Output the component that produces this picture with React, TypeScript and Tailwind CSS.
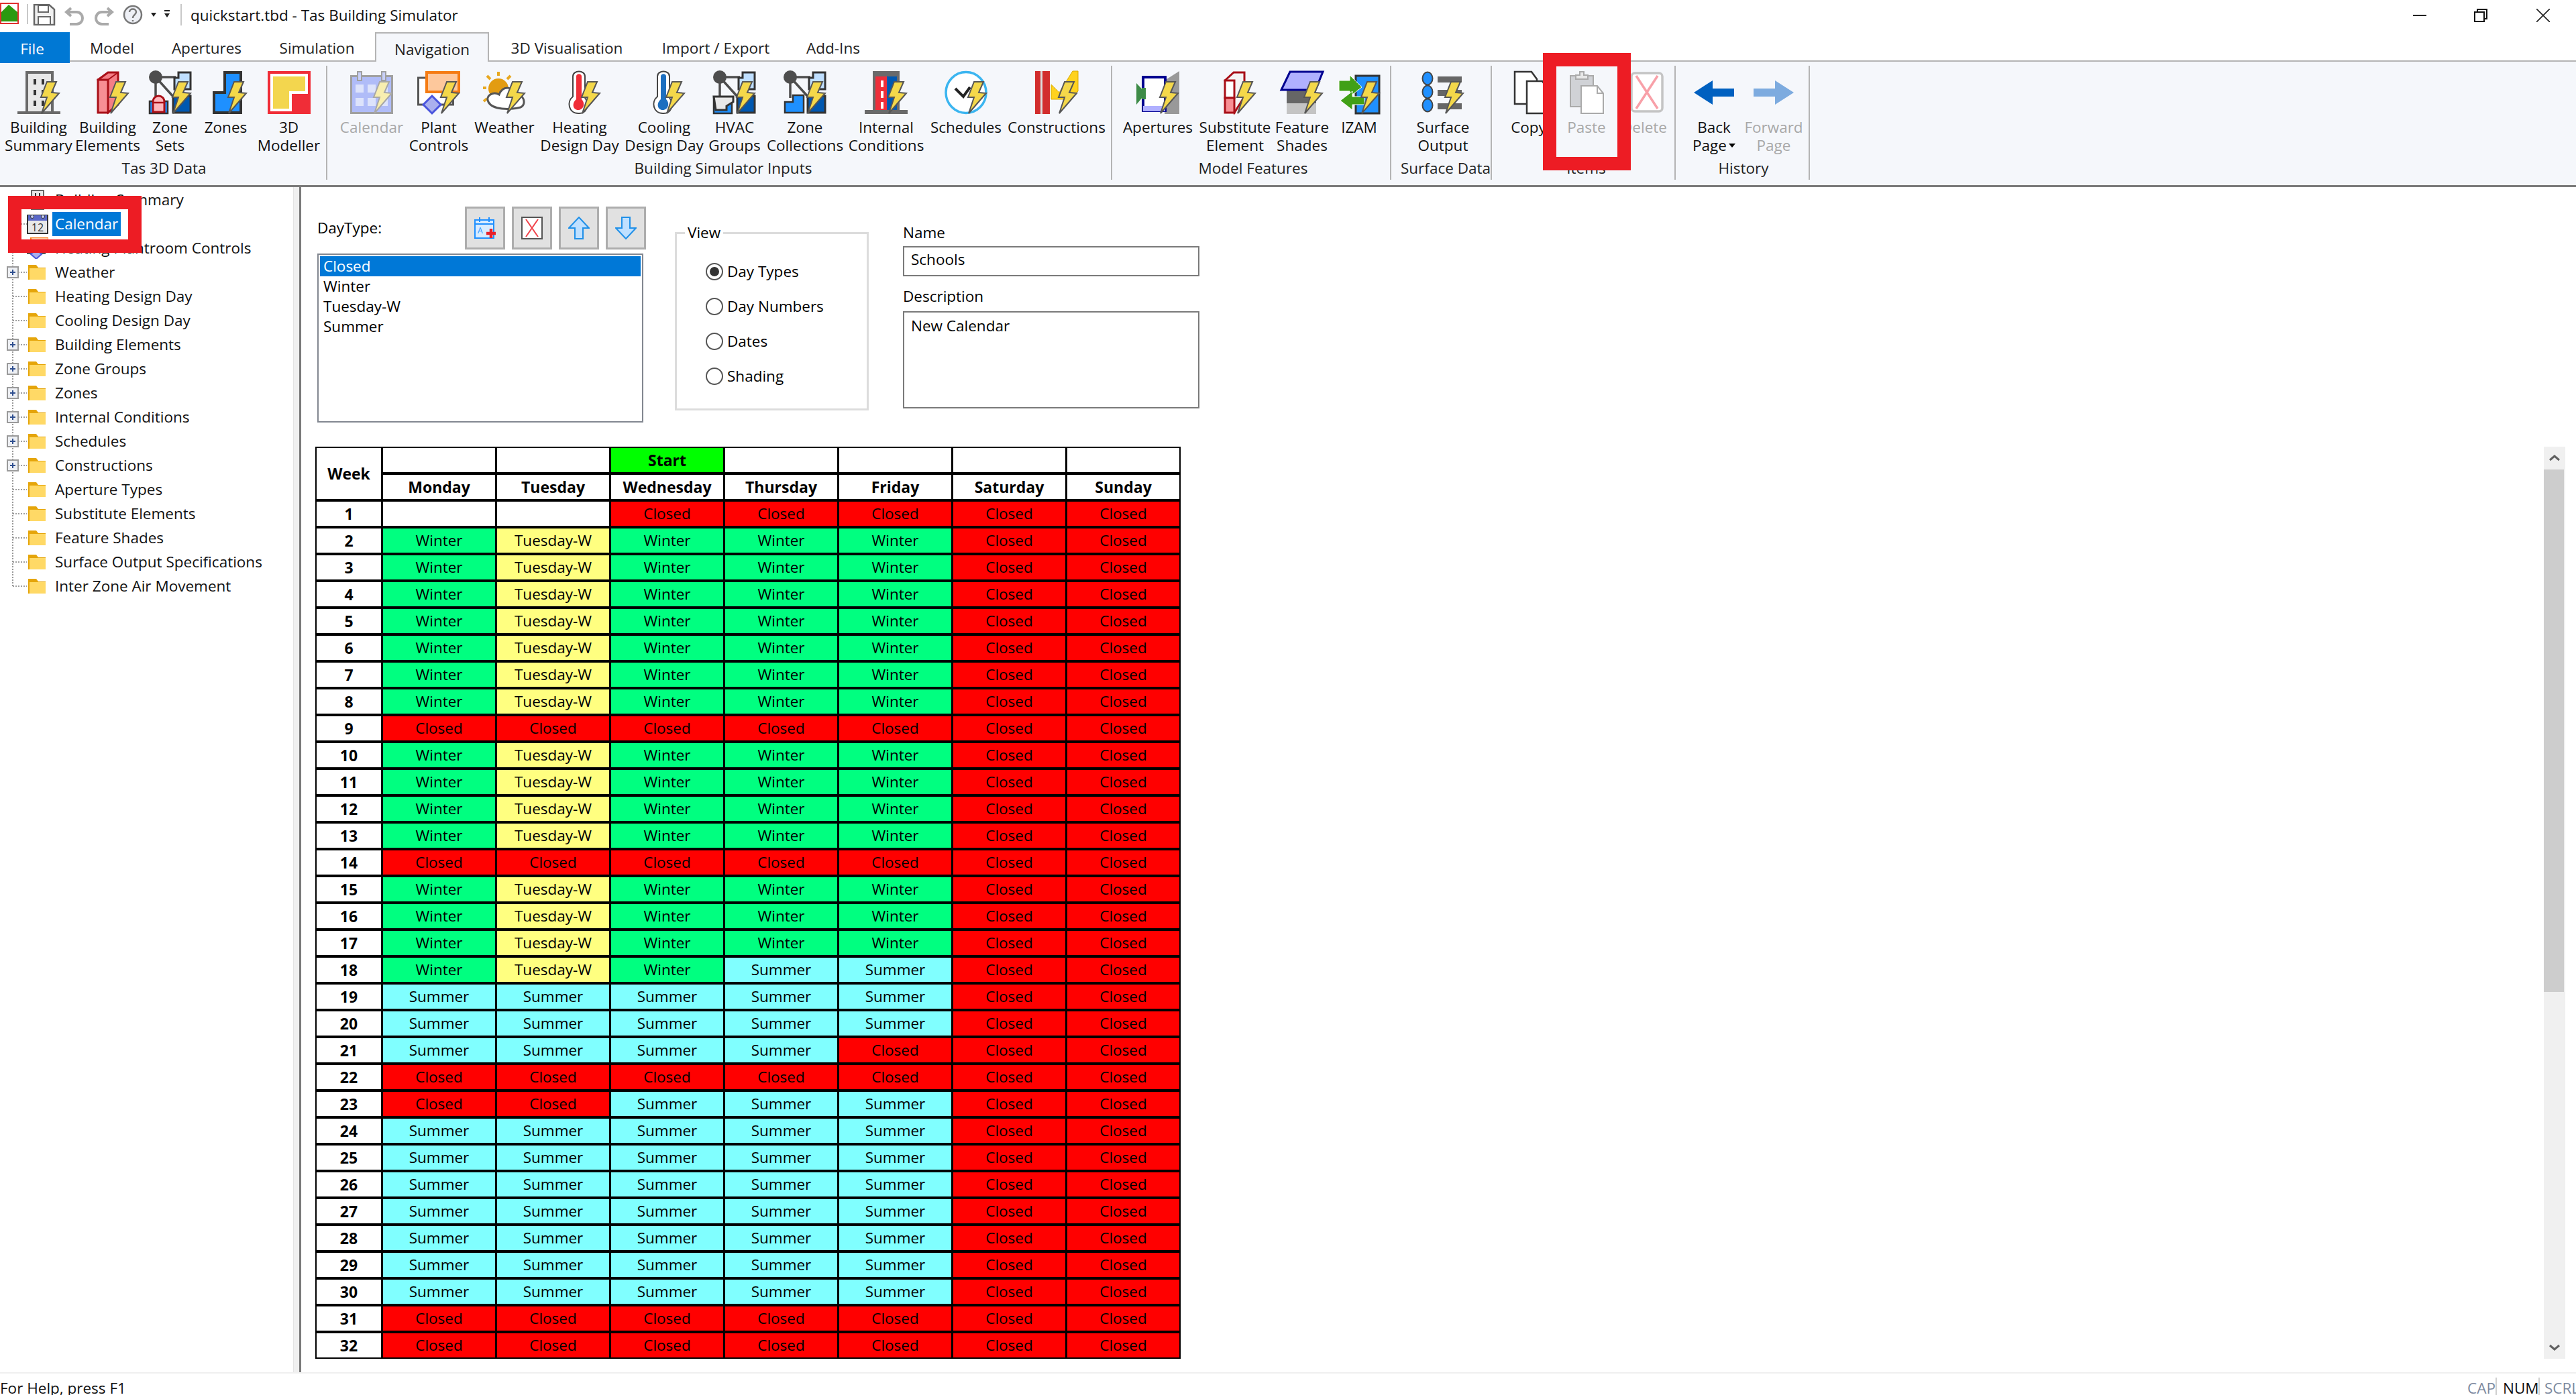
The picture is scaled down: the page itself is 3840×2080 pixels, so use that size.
import React from 'react';

const FONT = "font-['Open_Sans','Noto_Sans',sans-serif]";

// shared lightning bolt that sits on most of the ribbon icons
const Bolt: React.FC<{ faded?: boolean }> = ({ faded }) => (
  <polygon
    points="44,16 58,16 51,32 62,33 36,63 44,39 35,39"
    fill={faded ? '#f8eeb0' : '#f4d84a'}
    stroke={faded ? '#a8a8a8' : '#565656'}
    strokeWidth="2"
  />
);

const Svg: React.FC<{ children: React.ReactNode }> = ({ children }) => (
  <svg width="64" height="64" viewBox="0 0 64 64" className="overflow-visible">
    {children}
  </svg>
);

const Network: React.FC<{ children: React.ReactNode }> = ({ children }) => (
  <>
    <path d="M10 9H40M10 9V40M10 9L38 40" stroke="#4d4d4d" strokeWidth="3.5" fill="none" />
    <circle cx="10" cy="9" r="10" fill="#4d4d4d" />
    <path d="M44 2H62V27H38V10H44Z" fill="#bfdfff" stroke="#333" strokeWidth="3" />
    <path d="M36 62V37H62V62Z" fill="#0058b0" stroke="#333" strokeWidth="3" />
    {children}
    <Bolt />
  </>
);

const icons: Record<string, React.ReactNode> = {
  buildingSummary: (
    <Svg>
      <rect x="14" y="2" width="38" height="60" fill="#e8e8e8" stroke="#6a6a6a" strokeWidth="4" />
      <rect y="60" width="64" height="4" fill="#6a6a6a" />
      {[12, 28, 44].map((y) => (
        <React.Fragment key={y}>
          <rect x="24" y={y} width="4" height="8" fill="#333" />
          <rect x="36" y={y} width="4" height="8" fill="#333" />
        </React.Fragment>
      ))}
      <Bolt />
    </Svg>
  ),
  buildingElements: (
    <Svg>
      <path d="M17 13L32 2H47V50L32 62Z" fill="#f47f86" stroke="#a80f17" strokeWidth="3" />
      <rect x="17" y="13" width="15" height="49" fill="#f78f94" stroke="#a80f17" strokeWidth="3" />
      <path d="M32 13L47 2" stroke="#a80f17" strokeWidth="2" />
      <Bolt />
    </Svg>
  ),
  zoneSets: (
    <Svg>
      <Network>
        <rect x="1" y="45" width="27" height="18" fill="#1e90ff" stroke="#333" strokeWidth="2.5" />
        <path d="M6 61V46C6 34 23 34 23 46V61Z" fill="#ffb6bc" stroke="#a80f17" strokeWidth="3" />
        <path d="M6 47H23" stroke="#a80f17" strokeWidth="2.5" />
      </Network>
    </Svg>
  ),
  zones: (
    <Svg>
      <path d="M14 62V32H30V2H54V62Z" fill="#1e90ff" stroke="#333" strokeWidth="4" />
      <Bolt />
    </Svg>
  ),
  modeller: (
    <Svg>
      <rect width="64" height="64" fill="#f02d37" />
      <path d="M4 4H60V34H36V60H4Z" fill="#fff" />
      <path d="M8 8H56V30H32V56H8Z" fill="#f3d64e" />
    </Svg>
  ),
  calendar: (
    <Svg>
      <rect x="1.5" y="7.5" width="61" height="55" fill="#b0bcf8" stroke="#a0a0a0" strokeWidth="3" />
      <rect x="11" y="1" width="6" height="13" fill="#c8d0f8" stroke="#a0a0a0" strokeWidth="2" />
      <rect x="47" y="1" width="6" height="13" fill="#c8d0f8" stroke="#a0a0a0" strokeWidth="2" />
      {[20, 40].map((y) =>
        [8, 26, 44].map((x) => <rect key={`${x}-${y}`} x={x} y={y} width="12" height="12" fill="#dde3fb" />),
      )}
      <Bolt faded />
    </Svg>
  ),
  plantControls: (
    <Svg>
      <rect x="1.5" y="10" width="52" height="40" fill="#fff" stroke="#555" strokeWidth="3" />
      <rect x="14" y="2" width="48" height="29" fill="#fdc89c" stroke="#f57c13" strokeWidth="4" />
      <path d="M22 37L35 50L22 63L9 50Z" fill="#aab0ee" stroke="#4a55dd" strokeWidth="3" />
      <Bolt />
    </Svg>
  ),
  weather: (
    <Svg>
      <circle cx="23" cy="26" r="15" fill="#e39c12" />
      <path d="M23 1V7M6 7L11 12M41 7L36 12M0 25H5M1 45L6 41" stroke="#e8a820" strokeWidth="4" />
      <path d="M8 46C3 36 16 30 24 35C30 20 46 24 48 34C60 32 66 50 56 54C40 58 14 58 8 46Z" fill="#fff" stroke="#555" strokeWidth="3" />
      <Bolt />
    </Svg>
  ),
  heating: (
    <Svg>
      <path d="M22 38V8C22 -2 40 -2 40 8V40C48 50 42 64 30 63C16 63 12 46 22 38Z" fill="#fff" stroke="#444" strokeWidth="2" />
      <path d="M27 42V8C27 3 35 3 35 8V42C41 48 38 58 30 58C22 58 20 48 27 42Z" fill="#f02d37" />
      <Bolt />
    </Svg>
  ),
  cooling: (
    <Svg>
      <path d="M22 38V8C22 -2 40 -2 40 8V40C48 50 42 64 30 63C16 63 12 46 22 38Z" fill="#fff" stroke="#444" strokeWidth="2" />
      <path d="M27 42V8C27 3 35 3 35 8V42C41 48 38 58 30 58C22 58 20 48 27 42Z" fill="#1c6fc0" />
      <Bolt />
    </Svg>
  ),
  hvac: (
    <Svg>
      <Network>
        <rect x="1" y="40" width="27" height="23" fill="#1e90ff" stroke="#333" strokeWidth="2.5" />
        <path d="M1 38H30V46L20 52V58H4Z" fill="#e8e8e8" stroke="#333" strokeWidth="3" />
      </Network>
    </Svg>
  ),
  zoneCollections: (
    <Svg>
      <Network>
        <path d="M2 62V46H14V36H30V62Z" fill="#1e90ff" stroke="#333" strokeWidth="2.5" />
      </Network>
    </Svg>
  ),
  internal: (
    <Svg>
      <rect x="12" width="40" height="60" fill="#6a6a6a" />
      <rect x="16" y="8" width="17" height="52" fill="#ee2e3a" />
      <rect x="33" y="8" width="15" height="52" fill="#0058b0" />
      {[14, 30, 46].map((y) => (
        <rect key={y} x="24" y={y} width="4" height="10" fill="#fff" />
      ))}
      <rect y="58" width="64" height="6" fill="#6a6a6a" />
      <Bolt />
    </Svg>
  ),
  schedules: (
    <Svg>
      <ellipse cx="32" cy="32" rx="30" ry="30.5" fill="#fff" stroke="#3bb5f0" strokeWidth="3.5" />
      <path d="M16 26L28 38L38 24" stroke="#222" strokeWidth="4" fill="none" />
      <Bolt />
    </Svg>
  ),
  constructions: (
    <Svg>
      <rect x="0" width="8" height="64" fill="#d22d2d" />
      <rect x="8" width="3" height="64" fill="#ddd" />
      <rect x="11" width="11" height="64" fill="#d22d2d" />
      <path d="M24 20L36 32L56 0H64V30L50 42H24Z" fill="#ffd21e" stroke="#d8a800" strokeWidth="1" />
      <Bolt />
    </Svg>
  ),
  apertures: (
    <Svg>
      <path d="M42 14L64 0V64H42Z" fill="#999" />
      <rect x="10" y="9" width="33" height="50" fill="#fff" stroke="#000090" strokeWidth="4" />
      <rect x="10" y="52" width="33" height="8" fill="#b0b0ff" />
      <path d="M0 18L14 33L0 50Z" fill="#3d8b47" />
      <path d="M8 25H14V42H8Z" fill="#3d8b47" />
      <Bolt />
    </Svg>
  ),
  substitute: (
    <Svg>
      <path d="M17 14L30 2H46V38L31 62Z" fill="#f4f4f4" stroke="#a80f17" strokeWidth="3" />
      <rect x="17" y="14" width="14" height="26" fill="#fff" stroke="#a80f17" strokeWidth="3" />
      <rect x="17" y="40" width="14" height="22" fill="#f78f94" stroke="#a80f17" strokeWidth="3" />
      <Bolt />
    </Svg>
  ),
  featureShades: (
    <Svg>
      <rect x="9" y="28" width="44" height="20" fill="#666" />
      <rect x="9" y="48" width="44" height="16" fill="#c4c4c4" />
      <path d="M14 1H63L52 28H1Z" fill="#b0b0ff" stroke="#000090" strokeWidth="3" />
      <Bolt />
    </Svg>
  ),
  izam: (
    <Svg>
      <rect x="27" y="7" width="35" height="56" fill="#2090ff" stroke="#333" strokeWidth="3" />
      <path d="M2 14H18V6L36 24L18 38V30H2Z" fill="#41a016" stroke="#fff" strokeWidth="1" />
      <path d="M40 38H22V30L4 44L22 58V50H40Z" fill="#41a016" stroke="#fff" strokeWidth="1" />
      <Bolt />
    </Svg>
  ),
  surfaceOutput: (
    <Svg>
      {[8, 28, 48].map((y) => (
        <rect key={y} x="24" y={y} width="36" height="9" fill="#666" />
      ))}
      {[11, 31, 51].map((y) => (
        <ellipse key={y} cx="9" cy={y} rx="7.5" ry="9.5" fill="#2090ff" stroke="#444" strokeWidth="2" />
      ))}
      <Bolt />
    </Svg>
  ),
  copy: (
    <Svg>
      <path d="M11 1H36L44 12V49H11Z" fill="#fff" stroke="#333" strokeWidth="2.5" />
      <path d="M29 15H52L60 26V63H29Z" fill="#fff" stroke="#333" strokeWidth="2.5" />
    </Svg>
  ),
  paste: (
    <Svg>
      <rect x="8" y="7" width="34" height="46" fill="#d0d2d6" stroke="#aaa" strokeWidth="2" />
      <path d="M16 12V6H22V1H28V6H34V12Z" fill="#e8e8e8" stroke="#aaa" strokeWidth="2" />
      <path d="M24 22H48L57 33V63H24Z" fill="#fff" stroke="#aaa" strokeWidth="2" />
      <path d="M48 22V33H57" fill="none" stroke="#aaa" strokeWidth="2" />
    </Svg>
  ),
  delete: (
    <Svg>
      <rect x="13" y="3" width="46" height="57" rx="5" fill="#fff" stroke="#c4c4c4" strokeWidth="3.5" />
      <path d="M20 7L52 56M52 7L20 56" stroke="#f8a0a8" strokeWidth="3.5" />
    </Svg>
  ),
  back: (
    <svg width="60" height="64" viewBox="0 0 60 64">
      <path d="M0 32L28 14V26H60V38H28V50Z" fill="#0060c0" />
    </svg>
  ),
  forward: (
    <svg width="60" height="64" viewBox="0 0 60 64">
      <path d="M60 32L32 14V26H0V38H32V50Z" fill="#7dabdf" />
    </svg>
  ),
};

type RibbonItem = {
  icon: string;
  width: string;
  lines: string[];
  disabled?: boolean;
  caret?: boolean;
};

const RibbonButton: React.FC<RibbonItem> = ({ icon, width, lines, disabled, caret }) => (
  <div className={`${width} flex flex-col items-center shrink-0`}>
    <div className="h-[64px] flex justify-center">{icons[icon]}</div>
    <div className={`mt-[6px] text-center leading-[27px] whitespace-nowrap ${disabled ? 'text-[#a8a8a8]' : 'text-[#111]'}`}>
      {lines.map((line) => (
        <div key={line} className="flex items-center justify-center">
          {line}
          {caret && line === 'Page' && <span className="ml-[3px] border-x-[5px] border-t-[6px] border-x-transparent border-t-black" />}
        </div>
      ))}
    </div>
  </div>
);

const RibbonGroup: React.FC<{ outer: string; label: string; items: RibbonItem[]; labelClass?: string }> = ({ outer, label, items, labelClass }) => (
  <div className={`${outer} h-[170px] mt-[6px] border-r-2 border-[#b4b4b4] shrink-0`}>
    <div className="inline-flex flex-col">
      <div className="flex pt-[8px] h-[139px]">
        {items.map((item) => (
          <RibbonButton key={item.lines.join(' ')} {...item} />
        ))}
      </div>
      <div className={`text-center text-[#222] leading-[27px] whitespace-nowrap ${labelClass ?? ''}`}>{label}</div>
    </div>
  </div>
);

const tabs = [
  { name: 'Model', width: 'w-[126px]' },
  { name: 'Apertures', width: 'w-[156px]' },
  { name: 'Simulation', width: 'w-[173px]' },
  { name: 'Navigation', width: 'w-[170px]', active: true },
  { name: '3D Visualisation', width: 'w-[232px]' },
  { name: 'Import / Export', width: 'w-[212px]' },
  { name: 'Add-Ins', width: 'w-[138px]' },
];

const TitleBar: React.FC = () => (
  <div className="h-[48px] flex items-start shrink-0">
    <svg width="28" height="32" viewBox="0 0 28 32" className="mt-[4px]">
      <rect width="28" height="32" fill="#e03030" />
      <rect x="2" y="2" width="24" height="28" fill="#fff" />
      <path d="M2 14L13 3L26 14V28H2Z" fill="#2a9a10" />
    </svg>
    <div className="ml-[12px] mt-[6px] w-[2px] h-[30px] bg-[#c8c8c8]" />
    <svg width="34" height="32" viewBox="0 0 34 32" className="ml-[7px] mt-[6px]">
      <path d="M2 1H24L32 8V31H2Z" fill="#f0f0f0" stroke="#666" strokeWidth="2.5" />
      <rect x="8" y="2" width="15" height="10" fill="#fff" stroke="#666" strokeWidth="2" />
      <rect x="8" y="19" width="18" height="12" fill="#fff" stroke="#666" strokeWidth="2" />
    </svg>
    <svg width="32" height="32" viewBox="0 0 32 32" className="ml-[13px] mt-[8px]">
      <path d="M10 4L3 10L10 16M4 10H18C30 10 30 28 18 28H8" fill="none" stroke="#aaa" strokeWidth="4" />
    </svg>
    <svg width="32" height="32" viewBox="0 0 32 32" className="ml-[10px] mt-[8px]">
      <path d="M22 4L29 10L22 16M28 10H14C2 10 2 28 14 28H24" fill="none" stroke="#aaa" strokeWidth="4" />
    </svg>
    <svg width="30" height="30" viewBox="0 0 30 30" className="ml-[13px] mt-[7px]">
      <circle cx="15" cy="15" r="13" fill="#eef0f6" stroke="#777" strokeWidth="2.5" />
      <path d="M10 11C10 5 20 5 20 11C20 15 15 15 15 20M15 23V25" fill="none" stroke="#777" strokeWidth="2.5" />
    </svg>
    <span className="ml-[12px] mt-[19px] border-x-[4px] border-t-[6px] border-x-transparent border-t-[#222]" />
    <div className="ml-[12px] mt-[15px] flex flex-col items-center">
      <span className="w-[8px] h-[2px] bg-[#222] mb-[3px]" />
      <span className="border-x-[4px] border-t-[6px] border-x-transparent border-t-[#222]" />
    </div>
    <div className="ml-[16px] mt-[6px] w-[2px] h-[32px] bg-[#c8c8c8]" />
    <div className="ml-[13px] leading-[46px] text-[#111] whitespace-nowrap">quickstart.tbd - Tas Building Simulator</div>
    <div className="flex-1" />
    <svg width="20" height="20" viewBox="0 0 20 20" className="mt-[13px]">
      <path d="M0 10H20" stroke="#222" strokeWidth="2" />
    </svg>
    <svg width="20" height="20" viewBox="0 0 20 20" className="ml-[71px] mt-[13px]">
      <path d="M5 4V1H19V15H16M1 5H15V19H1Z" fill="none" stroke="#111" strokeWidth="2" />
    </svg>
    <svg width="20" height="20" viewBox="0 0 20 20" className="ml-[73px] mr-[39px] mt-[13px]">
      <path d="M0 0L20 20M20 0L0 20" stroke="#222" strokeWidth="1.6" />
    </svg>
  </div>
);

const TabRow: React.FC = () => (
  <div className="h-[44px] flex border-b-2 border-[#b4b4b4] shrink-0 relative z-10 text-[#222]">
    <div className="w-[104px] h-[46px] bg-[#0078d4] text-white flex items-center justify-center pr-[8px] pt-[4px]">File</div>
    {tabs.map((tab) => (
      <div
        key={tab.name}
        className={`${tab.width} flex items-center justify-center pt-[5px] ${tab.active ? 'h-[44px] bg-[#f5f7fb] border-2 border-b-0 border-[#b4b4b4]' : 'h-[42px]'}`}
      >
        {tab.name}
      </div>
    ))}
  </div>
);

const Ribbon: React.FC = () => (
  <div className="h-[187px] flex bg-[#f5f7fb] border-b-[3px] border-b-[#7a7a7a] shrink-0">
    <RibbonGroup
      outer="w-[488px] pl-[6px]"
      label="Tas 3D Data"
      items={[
        { icon: 'buildingSummary', width: 'w-[103px]', lines: ['Building', 'Summary'] },
        { icon: 'buildingElements', width: 'w-[103px]', lines: ['Building', 'Elements'] },
        { icon: 'zoneSets', width: 'w-[83px]', lines: ['Zone', 'Sets'] },
        { icon: 'zones', width: 'w-[83px]', lines: ['Zones'] },
        { icon: 'modeller', width: 'w-[105px]', lines: ['3D', 'Modeller'] },
      ]}
    />
    <RibbonGroup
      outer="w-[1170px] pl-[17px]"
      label="Building Simulator Inputs"
      items={[
        { icon: 'calendar', width: 'w-[98px]', lines: ['Calendar'], disabled: true },
        { icon: 'plantControls', width: 'w-[102px]', lines: ['Plant', 'Controls'] },
        { icon: 'weather', width: 'w-[94px]', lines: ['Weather'] },
        { icon: 'heating', width: 'w-[130px]', lines: ['Heating', 'Design Day'] },
        { icon: 'cooling', width: 'w-[122px]', lines: ['Cooling', 'Design Day'] },
        { icon: 'hvac', width: 'w-[88px]', lines: ['HVAC', 'Groups'] },
        { icon: 'zoneCollections', width: 'w-[122px]', lines: ['Zone', 'Collections'] },
        { icon: 'internal', width: 'w-[120px]', lines: ['Internal', 'Conditions'] },
        { icon: 'schedules', width: 'w-[118px]', lines: ['Schedules'] },
        { icon: 'constructions', width: 'w-[152px]', lines: ['Constructions'] },
      ]}
    />
    <RibbonGroup
      outer="w-[416px] pl-[10px]"
      label="Model Features"
      items={[
        { icon: 'apertures', width: 'w-[116px]', lines: ['Apertures'] },
        { icon: 'substitute', width: 'w-[114px]', lines: ['Substitute', 'Element'] },
        { icon: 'featureShades', width: 'w-[86px]', lines: ['Feature', 'Shades'] },
        { icon: 'izam', width: 'w-[84px]', lines: ['IZAM'] },
      ]}
    />
    <RibbonGroup
      outer="w-[150px] pl-[5px]"
      label="Surface Data"
      labelClass="pl-[8px]"
      items={[{ icon: 'surfaceOutput', width: 'w-[144px]', lines: ['Surface', 'Output'] }]}
    />
    <RibbonGroup
      outer="w-[274px] pl-[11px]"
      label="Items"
      items={[
        { icon: 'copy', width: 'w-[87px]', lines: ['Copy'] },
        { icon: 'paste', width: 'w-[86px]', lines: ['Paste'], disabled: true },
        { icon: 'delete', width: 'w-[86px]', lines: ['Delete'], disabled: true },
      ]}
    />
    <RibbonGroup
      outer="w-[200px] pl-[12px]"
      label="History"
      items={[
        { icon: 'back', width: 'w-[90px]', lines: ['Back', 'Page'], caret: true },
        { icon: 'forward', width: 'w-[88px]', lines: ['Forward', 'Page'], disabled: true },
      ]}
    />
  </div>
);

const TreeGuide: React.FC<{ plus?: boolean; first?: boolean; last?: boolean }> = ({ plus, first, last }) => (
  <svg width="40" height="36" viewBox="0 0 40 36" className="shrink-0">
    <path d={`M19 ${first ? 18 : 0}V${last ? 18 : 36}M19 18H40`} stroke="#808080" strokeWidth="1.6" strokeDasharray="2 2" fill="none" />
    {plus && (
      <>
        <rect x="11" y="10" width="16" height="16" fill="#eef0f4" stroke="#9a9a9a" strokeWidth="2" />
        <path d="M15 18H23M19 14V22" stroke="#2f4f8f" strokeWidth="2" />
      </>
    )}
  </svg>
);

const Folder: React.FC = () => (
  <svg width="32" height="36" viewBox="0 0 32 36" className="shrink-0">
    <path d="M2 7H14L17 11H28V29H2Z" fill="#e5a50a" />
    <rect x="4" y="12" width="24" height="17" fill="#ffd966" />
  </svg>
);

const treeItems = [
  { name: 'Weather', plus: true },
  { name: 'Heating Design Day' },
  { name: 'Cooling Design Day' },
  { name: 'Building Elements', plus: true },
  { name: 'Zone Groups', plus: true },
  { name: 'Zones', plus: true },
  { name: 'Internal Conditions', plus: true },
  { name: 'Schedules', plus: true },
  { name: 'Constructions', plus: true },
  { name: 'Aperture Types' },
  { name: 'Substitute Elements' },
  { name: 'Feature Shades' },
  { name: 'Surface Output Specifications' },
  { name: 'Inter Zone Air Movement' },
];

const Tree: React.FC = () => (
  <div className="w-[438px] pt-[1px] border-r border-[#e4e4e4] shrink-0 text-[#111] relative">
    <div className="h-[36px] flex items-center">
      <TreeGuide first />
      <svg width="32" height="32" viewBox="0 0 32 32" className="shrink-0">
        <rect x="7" y="2" width="18" height="28" fill="#e8e8e8" stroke="#666" strokeWidth="2" />
        <path d="M13 6V10M19 6V10" stroke="#333" strokeWidth="2" />
      </svg>
      <span className="ml-[10px]">Building Summary</span>
    </div>
    <div className="h-[36px] flex items-center">
      <TreeGuide />
      <svg width="32" height="32" viewBox="0 0 32 32" className="shrink-0">
        <rect x="1" y="3" width="30" height="27" fill="#e8e8e8" stroke="#333" strokeWidth="2" />
        <rect x="2" y="3" width="28" height="8" fill="#5a68c8" />
        <circle cx="8" cy="5" r="2.5" fill="#c8d0f8" stroke="#333" />
        <circle cx="24" cy="5" r="2.5" fill="#c8d0f8" stroke="#333" />
        <text x="16" y="27" textAnchor="middle" fontSize="16" fill="#333" fontFamily="Open Sans">12</text>
      </svg>
      <span className="ml-[6px] px-[4px] h-[36px] w-[102px] bg-[#0078d7] text-white flex items-center">Calendar</span>
    </div>
    <div className="h-[36px] flex items-center">
      <TreeGuide />
      <svg width="32" height="32" viewBox="0 0 32 32" className="shrink-0">
        <rect x="6" y="0" width="26" height="16" fill="#fdc89c" stroke="#f57c13" strokeWidth="2" />
        <rect x="1" y="6" width="26" height="18" fill="#fff" stroke="#555" strokeWidth="2" />
        <path d="M14 18L22 25L14 32L6 25Z" fill="#aab0ee" stroke="#4a55dd" strokeWidth="2" />
      </svg>
      <span className="ml-[10px]">Heating Plantroom Controls</span>
    </div>
    {treeItems.map((item, index) => (
      <div key={item.name} className="h-[36px] flex items-center">
        <TreeGuide plus={item.plus} last={index === treeItems.length - 1} />
        <Folder />
        <span className="ml-[10px] whitespace-nowrap">{item.name}</span>
      </div>
    ))}
    {/* red callout drawn over the selected tree row */}
    <div className="absolute left-[12px] top-[13px] w-[199px] h-[85px] border-[20px] border-[#ed1c24] z-20" />
  </div>
);

const ToolButton: React.FC<{ children: React.ReactNode; first?: boolean }> = ({ children, first }) => (
  <div className={`w-[60px] h-[64px] bg-[#e1e1e1] border-[3px] border-[#adadad] flex items-center justify-center ${first ? '' : 'ml-[10px]'}`}>
    {children}
  </div>
);

const DayTypePanel: React.FC = () => (
  <div className="w-[490px] shrink-0">
    <div className="flex items-center h-[64px]">
      <span className="w-[220px]">DayType:</span>
      <ToolButton first>
        <svg width="34" height="34" viewBox="0 0 34 34">
          <rect x="2" y="5" width="28" height="27" fill="#d8ecff" stroke="#2090ff" strokeWidth="2" />
          <path d="M2 11H30M9 1V8M23 1V8" stroke="#2090ff" strokeWidth="2" />
          <text x="6" y="25" fontSize="12" fill="#2090ff" fontFamily="Open Sans">A</text>
          <path d="M26 18V32M19 25H33" stroke="#e8202a" strokeWidth="4.5" />
        </svg>
      </ToolButton>
      <ToolButton>
        <svg width="32" height="34" viewBox="0 0 32 34">
          <rect x="1" y="1" width="30" height="32" fill="#fff" stroke="#555" strokeWidth="2" />
          <path d="M7 4L25 30M25 4L7 30" stroke="#f04048" strokeWidth="2" />
        </svg>
      </ToolButton>
      <ToolButton>
        <svg width="32" height="34" viewBox="0 0 32 34">
          <path d="M16 1L31 17H22V33H10V17H1Z" fill="#bfe0ff" stroke="#2090e8" strokeWidth="2" />
        </svg>
      </ToolButton>
      <ToolButton>
        <svg width="32" height="34" viewBox="0 0 32 34">
          <path d="M16 33L31 17H22V1H10V17H1Z" fill="#bfe0ff" stroke="#2090e8" strokeWidth="2" />
        </svg>
      </ToolButton>
    </div>
    <div className="mt-[6px] w-[486px] h-[252px] border-2 border-[#828790] p-[2px] leading-[30px]">
      <div className="h-[30px] bg-[#0078d7] text-white pl-[5px]">Closed</div>
      {['Winter', 'Tuesday-W', 'Summer'].map((name) => (
        <div key={name} className="pl-[5px]">{name}</div>
      ))}
    </div>
  </div>
);

const Radio: React.FC<{ label: string; checked?: boolean }> = ({ label, checked }) => (
  <div className="h-[52px] flex items-center">
    <span className="w-[26px] h-[26px] rounded-full border-2 border-[#555] flex items-center justify-center shrink-0">
      {checked && <span className="w-[14px] h-[14px] rounded-full bg-[#333]" />}
    </span>
    <span className="ml-[6px]">{label}</span>
  </div>
);

const ViewGroup: React.FC = () => (
  <fieldset className="ml-[43px] mt-[25px] w-[289px] h-[279px] border-[3px] border-[#dcdcdc] shrink-0">
    <legend className="ml-[12px] px-[4px] leading-[28px]">View</legend>
    <div className="pl-[43px] pt-[18px]">
      <Radio label="Day Types" checked />
      <Radio label="Day Numbers" />
      <Radio label="Dates" />
      <Radio label="Shading" />
    </div>
  </fieldset>
);

const NamePanel: React.FC = () => (
  <div className="ml-[51px] mt-[25px] w-[442px] shrink-0">
    <div className="leading-[28px] mb-[6px]">Name</div>
    <div className="h-[45px] border-2 border-[#7a7a7a] pl-[10px] leading-[36px]">Schools</div>
    <div className="leading-[28px] mt-[16px] mb-[8px]">Description</div>
    <div className="h-[145px] border-2 border-[#7a7a7a] pl-[10px] pt-[6px] leading-[28px]">New Calendar</div>
  </div>
);

const DAYS = ['Monday', 'Tuesday', 'Wednesday', 'Thursday', 'Friday', 'Saturday', 'Sunday'];

const WINTER = ['Winter', 'Tuesday-W', 'Winter', 'Winter', 'Winter', 'Closed', 'Closed'];
const SUMMER = ['Summer', 'Summer', 'Summer', 'Summer', 'Summer', 'Closed', 'Closed'];
const CLOSED = ['Closed', 'Closed', 'Closed', 'Closed', 'Closed', 'Closed', 'Closed'];

const weeks: string[][] = [
  ['', '', 'Closed', 'Closed', 'Closed', 'Closed', 'Closed'],
  WINTER, WINTER, WINTER, WINTER, WINTER, WINTER, WINTER,
  CLOSED,
  WINTER, WINTER, WINTER, WINTER,
  CLOSED,
  WINTER, WINTER, WINTER,
  ['Winter', 'Tuesday-W', 'Winter', 'Summer', 'Summer', 'Closed', 'Closed'],
  SUMMER, SUMMER,
  ['Summer', 'Summer', 'Summer', 'Summer', 'Closed', 'Closed', 'Closed'],
  CLOSED,
  ['Closed', 'Closed', 'Summer', 'Summer', 'Summer', 'Closed', 'Closed'],
  SUMMER, SUMMER, SUMMER, SUMMER, SUMMER, SUMMER, SUMMER,
  CLOSED, CLOSED,
];

const cellColor: Record<string, string> = {
  Winter: 'bg-[#00ff80]',
  'Tuesday-W': 'bg-[#ffff80]',
  Summer: 'bg-[#80ffff]',
  Closed: 'bg-[#ff0000]',
  '': 'bg-white',
};

const CalendarTable: React.FC = () => (
  <div className="grid grid-cols-[96px_repeat(7,167px)] grid-rows-[repeat(34,36px)] gap-x-[3px] gap-y-[4px] bg-black p-[2px] w-[1290px] h-[1360px] text-black">
    <div className="row-span-2 bg-white font-bold text-[23px] flex items-center justify-center">Week</div>
    {DAYS.map((day) => (
      <div key={day} className={`flex items-center justify-center font-bold text-[23px] ${day === 'Wednesday' ? 'bg-[#00ff00]' : 'bg-white'}`}>
        {day === 'Wednesday' ? 'Start' : ''}
      </div>
    ))}
    {DAYS.map((day) => (
      <div key={`${day}-name`} className="bg-white font-bold text-[23px] flex items-center justify-center">{day}</div>
    ))}
    {weeks.map((week, index) => (
      <React.Fragment key={index}>
        <div className="bg-white font-bold text-[23px] flex items-center justify-center">{index + 1}</div>
        {week.map((value, dayIndex) => (
          <div key={dayIndex} className={`${cellColor[value]} flex items-center justify-center`}>{value}</div>
        ))}
      </React.Fragment>
    ))}
  </div>
);

const ScrollBar: React.FC = () => (
  <div className="ml-auto mr-[16px] w-[32px] h-[1360px] bg-[#f0f0f0] flex flex-col">
    <div className="h-[34px] flex items-center justify-center">
      <svg width="16" height="10" viewBox="0 0 16 10">
        <path d="M1 8L8 2L15 8" fill="none" stroke="#606060" strokeWidth="3" />
      </svg>
    </div>
    <div className="w-[30px] h-[779px] bg-[#cdcdcd]" />
    <div className="flex-1" />
    <div className="h-[34px] flex items-center justify-center">
      <svg width="16" height="10" viewBox="0 0 16 10">
        <path d="M1 2L8 8L15 2" fill="none" stroke="#606060" strokeWidth="3" />
      </svg>
    </div>
  </div>
);

const StatusBar: React.FC = () => (
  <div className="h-[34px] flex border-t-2 border-[#f0f0f0] shrink-0 leading-[44px] text-[#111] overflow-hidden">
    <span>For Help, press F1</span>
    <div className="ml-auto w-[162px] shrink-0 flex">
      <span className="w-[43px] text-[#7d8aa0]">CAP</span>
      <span className="mt-[6px] w-[2px] h-[28px] bg-[#cfcfcf] shrink-0" />
      <span className="pl-[9px] w-[62px] shrink-0">NUM</span>
      <span className="mt-[6px] w-[2px] h-[28px] bg-[#cfcfcf] shrink-0" />
      <span className="pl-[7px] text-[#7d8aa0] whitespace-nowrap">SCRL</span>
    </div>
  </div>
);

const App: React.FC = () => {
  return (
    <div className={`${FONT} relative w-[3840px] h-[2080px] overflow-hidden bg-white flex flex-col text-[22.5px]`}>
      <TitleBar />
      <TabRow />
      <Ribbon />
      <div className="flex-1 flex min-h-0">
        <Tree />
        <div className="w-[8px] bg-[#f0f0f0] shrink-0" />
        <div className="flex-1 border-l-[3px] border-[#7a7a7a] flex flex-col">
          <div className="h-[387px] pl-[24px] pt-[29px] flex shrink-0">
            <DayTypePanel />
            <ViewGroup />
            <NamePanel />
          </div>
          <div className="flex pl-[21px]">
            <CalendarTable />
            <ScrollBar />
          </div>
        </div>
      </div>
      <StatusBar />
      {/* red callout drawn over the Paste button */}
      <div className="absolute left-[2300px] top-[79px] w-[131px] h-[175px] border-[20px] border-[#ed1c24] z-20" />
    </div>
  );
};

export default App;
